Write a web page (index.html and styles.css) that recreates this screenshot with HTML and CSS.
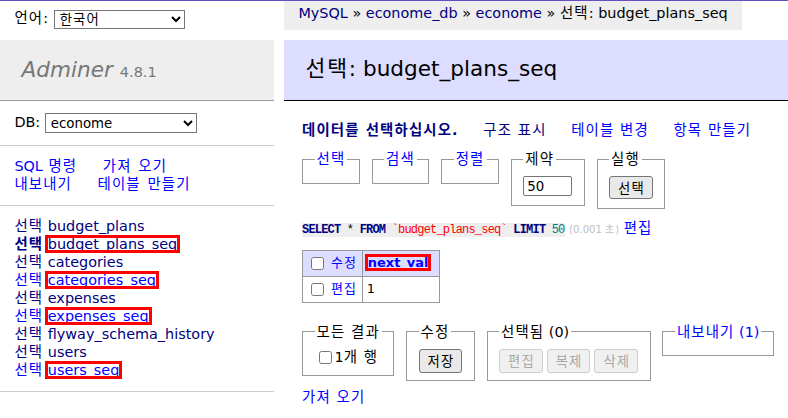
FILE: index.html
```html
<!DOCTYPE html>
<html lang="ko">
<head>
<meta charset="utf-8">
<title>선택: budget_plans_seq - Adminer</title>
<link rel="stylesheet" href="styles.css">
</head>
<body>
<div class="page">
  <aside class="menu">
    <form class="lang"><span class="k">언어:</span> <select class="lang-select k"><option>한국어</option></select></form>
    <h1><a class="h1link" href="#">Adminer</a> <span class="version">4.8.1</span></h1>
    <p class="dbs">DB: <select class="db-select"><option>econome</option></select></p>
    <p class="links side-links"><a href="#">SQL <span class="k">명령</span></a> <a class="k" href="#">가져 오기</a><br><a class="k" href="#">내보내기</a> <a class="k" href="#">테이블 만들기</a></p>
    <ul class="tables">
      <li><a class="v k" href="#">선택</a> <a class="v" href="#">budget_plans</a></li>
      <li><a class="v k active" href="#">선택</a> <a class="v mark" href="#">budget_plans_seq</a></li>
      <li><a class="v k" href="#">선택</a> <a class="v" href="#">categories</a></li>
      <li><a class="k" href="#">선택</a> <a class="mark" href="#">categories_seq</a></li>
      <li><a class="v k" href="#">선택</a> <a class="v" href="#">expenses</a></li>
      <li><a class="k" href="#">선택</a> <a class="mark" href="#">expenses_seq</a></li>
      <li><a class="v k" href="#">선택</a> <a class="v" href="#">flyway_schema_history</a></li>
      <li><a class="v k" href="#">선택</a> <a class="v" href="#">users</a></li>
      <li><a class="k" href="#">선택</a> <a class="mark" href="#">users_seq</a></li>
    </ul>
  </aside>
  <main class="main">
    <div class="breadcrumb"><a class="v" href="#">MySQL</a> » <a class="v" href="#">econome_db</a> » <a class="v" href="#">econome</a> » <span class="k">선택</span>: budget_plans_seq</div>
    <h2><span class="k">선택</span>: budget_plans_seq</h2>
    <div class="body">
      <p class="links top-links"><a class="v k active" href="#">데이터를 선택하십시오.</a> <a class="v k" href="#">구조 표시</a> <a class="k" href="#">테이블 변경</a> <a class="k" href="#">항목 만들기</a></p>
      <form class="select-form">
        <fieldset><legend class="k"><a href="#">선택</a></legend></fieldset>
        <fieldset><legend class="k"><a href="#">검색</a></legend></fieldset>
        <fieldset><legend class="k"><a href="#">정렬</a></legend></fieldset>
        <fieldset class="tall"><legend class="k">제약</legend><input class="size" type="text" value="50"></fieldset>
        <fieldset class="tall"><legend class="k">실행</legend><button class="btn blk k" type="button">선택</button></fieldset>
      </form>
      <p class="sql"><code class="jush"><b class="kw">SELECT</b> * <b class="kw">FROM</b> <span class="bac">`budget_plans_seq`</span> <b class="kw">LIMIT</b> <span class="num">50</span></code> <span class="time">(0.001 <span class="k">초</span>)</span> <a class="k" href="#">편집</a></p>
      <table class="data">
        <thead>
          <tr><td class="chk-cell"><input type="checkbox"> <a class="k" href="#">수정</a></td><th class="col"><a href="#"><span class="mark">next_val</span></a></th></tr>
        </thead>
        <tbody>
          <tr><td class="chk-cell"><input type="checkbox"> <a class="k" href="#">편집</a></td><td class="val">1</td></tr>
        </tbody>
      </table>
      <div class="footer">
        <fieldset><legend class="k">모든 결과</legend><label class="all"><input type="checkbox">1<span class="k">개 행</span></label></fieldset>
        <fieldset><legend class="k">수정</legend><button class="btn btn-lg blk k" type="button">저장</button></fieldset>
        <fieldset><legend><span class="k">선택됨</span> (0)</legend><div class="btns"><button class="btn btn-lg k" type="button" disabled>편집</button> <button class="btn btn-lg k" type="button" disabled>복제</button> <button class="btn btn-lg k" type="button" disabled>삭제</button></div></fieldset>
        <fieldset><legend><a href="#"><span class="k">내보내기</span> (1)</a></legend></fieldset>
      </div>
      <div class="import"><a class="k" href="#">가져 오기</a></div>
    </div>
  </main>
</div>
</body>
</html>
```
FILE: styles.css
```css
html, body {
  margin: 0;
}
body {
  font: 14.4px/1.25 "DejaVu Sans", "Noto Sans CJK KR", sans-serif;
  color: #000;
  background: #fff;
  border-top: 1px solid #6650c0;
}
a {
  color: #00f;
  text-decoration: none;
}
a.v {
  color: #000080;
}
.k {
  letter-spacing: 0.08em;
}
.active {
  font-weight: bold;
}
.page {
  display: flex;
  align-items: flex-start;
}
.menu {
  width: 274px;
  flex: none;
}
.main {
  flex: 1;
  margin-left: 10px;
  min-width: 0;
  display: flex;
  flex-direction: column;
}

/* selects */
select {
  font: 13.33px "DejaVu Sans", "Noto Sans CJK KR", sans-serif;
  border: 1px solid #767676;
  border-radius: 0;
  background: #fff;
  color: #000;
  vertical-align: middle;
  padding: 0 1px;
}
.lang {
  margin: 0;
  height: 35px;
  padding: 4px 14.4px 0;
  line-height: 26px;
}
.lang-select {
  width: 131px;
  height: 19px;
}
.db-select {
  width: 152px;
  height: 20px;
}

h1 {
  margin: 0;
  font-size: 21.6px;
  font-weight: normal;
  line-height: 1.25;
  padding: 16.5px 21.6px 17px;
  border-bottom: 1px solid #999;
  background: #eee;
  color: #777;
}
.h1link {
  color: #777;
  font-style: italic;
}
.version {
  color: #777;
  font-size: 14.47px;
}
.dbs, .side-links {
  margin: 0;
  padding: 11.52px 14.4px;
  border-bottom: 1px solid #ccc;
}
.side-links {
  word-spacing: 1px;
}
.links a {
  margin-right: 20px;
  white-space: nowrap;
}
.tables {
  margin: 0;
  padding: 11.52px 14.4px;
  border-bottom: 1px solid #ccc;
  list-style: none;
  white-space: nowrap;
}
.mark {
  position: relative;
}
.mark::after {
  content: "";
  position: absolute;
  left: -3px;
  right: -3px;
  top: -1px;
  bottom: -1px;
  border: 3px solid #f00;
  pointer-events: none;
}

/* main */
.breadcrumb {
  align-self: flex-start;
  white-space: nowrap;
  background: #eee;
  height: 28.8px;
  line-height: 25.92px;
  padding: 0 14.4px;
  margin-bottom: 10px;
}
h2 {
  margin: 0;
  font-size: 21.6px;
  font-weight: normal;
  line-height: 1.25;
  padding: 16.5px 21.6px;
  border-bottom: 1px solid #000;
  background: #ddf;
  color: #000;
}
.body {
  padding: 20px 0 20px 18px;
}
p {
  margin: 11.52px 0 0 0;
}
.top-links {
  margin-top: 0;
  white-space: nowrap;
}
form {
  margin: 0;
  white-space: nowrap;
}
fieldset {
  display: inline-block;
  vertical-align: top;
  padding: 7.2px 11.52px;
  margin: 11.52px 7.2px 0 0;
  border: 1px solid #999;
  min-inline-size: min-content;
}
fieldset.tall {
  padding-bottom: 9px;
}
legend {
  padding: 0 2px;
}
.size {
  display: block;
  font: 13.33px "DejaVu Sans", sans-serif;
  width: 49px;
  height: 20px;
  margin-top: 1px;
  border: 1px solid #767676;
  border-radius: 2px;
  padding: 1px 3px;
  box-sizing: border-box;
}
.btn {
  font: 13.33px "DejaVu Sans", "Noto Sans CJK KR", sans-serif;
  height: 23px;
  padding: 0 7px 0 8px;
  border: 1px solid #767676;
  border-radius: 3px;
  background: #e9e9e9;
  color: #000;
  vertical-align: top;
}
.blk {
  display: block;
  margin-top: 1px;
}
.btn-lg {
  height: 24px;
}
.btns {
  display: flex;
  gap: 4px;
  margin-top: 1px;
}
.btn:disabled {
  color: #a8a8a8;
  border-color: #cdcdcd;
  background: #f0f0f0;
}

/* sql */
.sql {
  margin-top: 10px;
}
.jush {
  font: 12px/1.25 "Liberation Mono", "DejaVu Sans Mono", monospace;
  letter-spacing: -0.8px;
  background: #eee;
}
.kw {
  color: #000080;
  font-weight: bold;
}
.bac {
  color: #f00;
}
.num {
  color: #007f7f;
}
.time {
  color: silver;
  font-size: 10.08px;
}

/* table */
.data {
  margin: 12px 20px 0 0;
  border-collapse: collapse;
  font-size: 12.96px;
}
.data td, .data th {
  border: 1px solid #999;
  padding: 2.6px 3.9px;
  text-align: left;
}
.data thead td, .data thead th {
  background: #ddf;
}
.data thead th {
  padding: 2.6px 5px;
}
.data thead tr {
  height: 24px;
}
.data tbody tr {
  height: 26px;
}
.chk-cell {
  width: 51px;
  white-space: nowrap;
}
.chk-cell input {
  margin: 3px 3px 3px 4px;
  vertical-align: middle;
}
.col {
  width: 66px;
}
.col a {
  font-weight: bold;
}
.val {
  vertical-align: middle;
}

/* footer */
.footer {
  padding-top: 20px;
  padding-bottom: 7.2px;
}
.footer fieldset {
  margin-top: 0;
}
.all input {
  margin: 3px 3px 3px 4px;
  vertical-align: middle;
}
```
